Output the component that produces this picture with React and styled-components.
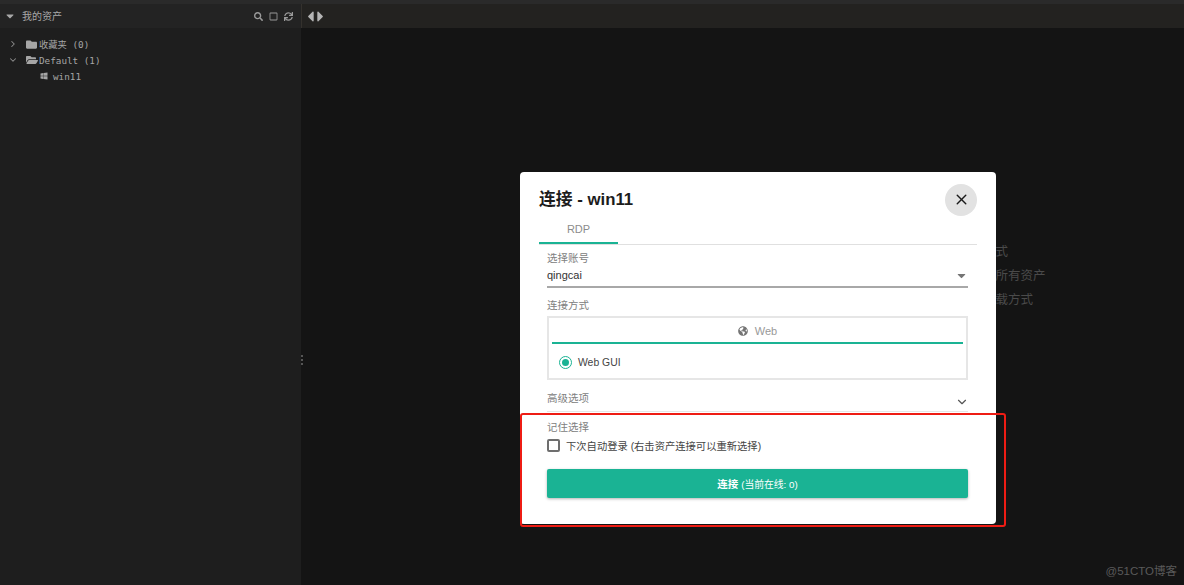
import React from "react";
import styled, { createGlobalStyle } from "styled-components";
import {
  FaCaretDown,
  FaCaretLeft,
  FaCaretRight,
  FaFolder,
  FaFolderOpen,
  FaGlobeAmericas,
  FaRegSquare,
  FaSearch,
  FaSync,
  FaWindows
} from "react-icons/fa";
import { ChevronDown, ChevronRight, X } from "lucide-react";

const SANS = `"Liberation Sans", Roboto, "Noto Sans CJK SC", sans-serif`;
const MONO = `"DejaVu Sans Mono", "Noto Sans CJK SC", monospace`;
const TEAL = "#1ab394";

const GlobalStyle = createGlobalStyle`
  html, body {
    margin: 0;
    height: 100%;
    background: #141414;
    overflow: hidden;
    font-family: ${SANS};
  }
  #root {
    height: 100%;
  }
`;

const Page = styled.div`
  position: relative;
  width: 1184px;
  height: 585px;
  display: flex;
  flex-direction: column;
  overflow: hidden;
`;

const TopStripe = styled.div`
  height: 4px;
  flex: none;
  background: #2a2a2a;
`;

const Workspace = styled.div`
  flex: 1;
  display: flex;
  min-height: 0;
`;

const Sidebar = styled.aside`
  width: 301px;
  flex: none;
  background: #1e1e1e;
  display: flex;
  flex-direction: column;
`;

const SidebarHeader = styled.div`
  height: 24px;
  display: flex;
  align-items: center;
  padding: 0 8px 0 4px;
  background: #232323;
  color: #a8a8a8;
`;

const HeaderTitle = styled.span`
  margin-left: 6px;
  margin-top: -1px;
  flex: 1;
  font-size: 10px;
`;

const HeaderIcons = styled.div`
  display: flex;
  align-items: center;
  gap: 6px;
  color: #9a9a9a;
`;

const Tree = styled.ul`
  list-style: none;
  margin: 0;
  padding: 8px 0 0;
  color: #a6a6a6;
  font-family: ${MONO};
  font-size: 9.3px;
`;

const TreeRow = styled.li`
  height: 16px;
  display: flex;
  align-items: center;
  padding-left: ${p => p.$indent}px;
  gap: ${p => p.$gap || 0}px;
  white-space: pre;
`;

const Caret = styled.span`
  width: 18px;
  display: flex;
  color: #8f8f8f;
`;

const FolderIcon = styled.span`
  width: 13px;
  display: flex;
  color: #a6a6a6;
`;

const WindowsIcon = styled.span`
  width: 8px;
  display: flex;
  color: #a6a6a6;
`;

const Main = styled.main`
  flex: 1;
  display: flex;
  flex-direction: column;
  background: #141414;
  border-left: 1px solid #141414;
`;

const TabBar = styled.div`
  height: 24px;
  background: #232220;
  display: flex;
  align-items: center;
  color: #b4b4b4;
  border-left: 1px solid #34312d;
  margin-left: -1px;
`;

const Hints = styled.ul`
  list-style: none;
  margin: 0;
  padding: 212px 0 0 631px;
  color: #4a4a4a;
  font-size: 12.5px;
  line-height: 24px;
`;

const Splitter = styled.div`
  position: absolute;
  left: 301px;
  top: 355px;
  display: flex;
  flex-direction: column;
  gap: 2px;
`;

const SplitterDot = styled.i`
  width: 2px;
  height: 2px;
  background: #555;
`;

const Modal = styled.div`
  position: absolute;
  left: 520px;
  top: 172px;
  width: 476px;
  height: 352px;
  box-sizing: border-box;
  padding: 12px 19px 0;
  background: #fff;
  border-radius: 4px;
  display: flex;
  flex-direction: column;
`;

const ModalHead = styled.div`
  display: flex;
  align-items: center;
  justify-content: space-between;
  height: 31px;
`;

const ModalTitle = styled.h2`
  margin: 0 0 3px;
  font-size: 16.8px;
  font-weight: 700;
  color: #1c1c1c;
`;

const CloseButton = styled.button`
  width: 32px;
  height: 32px;
  border: 0;
  padding: 0;
  border-radius: 50%;
  background: #e2e2e2;
  color: #1a1a1a;
  display: flex;
  align-items: center;
  justify-content: center;
`;

const Tabs = styled.div`
  height: 29px;
  border-bottom: 1px solid #e0e0e0;
  display: flex;
`;

const Tab = styled.div`
  width: 79px;
  height: 29px;
  box-sizing: border-box;
  border-bottom: 2px solid ${TEAL};
  color: #8c8c8c;
  font-size: 11px;
  display: flex;
  align-items: center;
  justify-content: center;
`;

const Form = styled.div`
  padding: 0 9px 0 8px;
  display: flex;
  flex-direction: column;
`;

const FieldLabel = styled.div`
  color: #808080;
  font-size: 10.5px;
  line-height: 14px;
  margin-top: ${p => p.$top || 0}px;
`;

const SelectRow = styled.div`
  height: 23px;
  box-sizing: border-box;
  border-bottom: 2px solid #a8a8a8;
  display: flex;
  align-items: center;
  justify-content: space-between;
  color: #333;
  font-size: 11px;
  padding-bottom: 1px;
`;

const SelectCaret = styled.span`
  display: flex;
  color: #757575;
`;

const MethodBox = styled.div`
  margin-top: 4px;
  height: 64px;
  box-sizing: border-box;
  border: 2px solid #e6e6e6;
  padding: 0 3px;
  display: flex;
  flex-direction: column;
`;

const MethodTab = styled.div`
  height: 26px;
  box-sizing: border-box;
  border-bottom: 2px solid ${TEAL};
  color: #999;
  font-size: 11px;
  display: flex;
  align-items: center;
  justify-content: center;
  gap: 7px;
  padding-top: 1px;
`;

const GlobeIcon = styled.span`
  display: flex;
  color: #757575;
`;

const RadioRow = styled.label`
  flex: 1;
  display: flex;
  align-items: center;
  padding: 2px 0 0 7px;
  gap: 6px;
  color: #444;
  font-size: 10.4px;
`;

const RadioMark = styled.span`
  width: 11px;
  height: 11px;
  border-radius: 50%;
  border: 1px solid ${TEAL};
  display: flex;
  align-items: center;
  justify-content: center;
`;

const RadioDot = styled.span`
  width: 7px;
  height: 7px;
  border-radius: 50%;
  background: ${TEAL};
`;

const AdvancedRow = styled.div`
  margin-top: 11px;
  height: 21px;
  box-sizing: border-box;
  border-bottom: 1px solid #e6e6e6;
  display: flex;
  justify-content: space-between;
  color: #808080;
  font-size: 10.5px;
  line-height: 14px;
`;

const AdvancedChevron = styled.span`
  display: flex;
  color: #555;
  margin: 4px -1px 0 0;
`;

const RememberRow = styled.label`
  margin-top: 4px;
  height: 14px;
  display: flex;
  align-items: center;
  gap: 6px;
  color: #444;
  font-size: 10.3px;
`;

const CheckBox = styled.span`
  width: 13px;
  height: 13px;
  box-sizing: border-box;
  border: 2px solid #6e6e6e;
  border-radius: 2px;
`;

const ConnectButton = styled.button`
  margin-top: 17px;
  height: 29px;
  border: 0;
  border-radius: 2px;
  background: ${TEAL};
  color: #fff;
  font-family: ${SANS};
  font-size: 10.5px;
  font-weight: 700;
  box-shadow: 0 1px 3px rgba(0, 0, 0, 0.3);
`;

const ButtonNote = styled.span`
  font-size: 9.8px;
  font-weight: 400;
`;

const RedFrame = styled.div`
  position: absolute;
  left: 520px;
  top: 413px;
  width: 486px;
  height: 114px;
  box-sizing: border-box;
  border: 2px solid #ee1c14;
  border-radius: 3px;
  pointer-events: none;
`;

const Watermark = styled.div`
  position: absolute;
  right: 7px;
  bottom: 7px;
  color: #5a5a5a;
  font-size: 11.5px;
`;

const App = () => (
  <Page>
    <GlobalStyle />
    <TopStripe />
    <Workspace>
      <Sidebar>
        <SidebarHeader>
          <FaCaretDown size={12} />
          <HeaderTitle>我的资产</HeaderTitle>
          <HeaderIcons>
            <FaSearch size={9} />
            <FaRegSquare size={9} />
            <FaSync size={9} />
          </HeaderIcons>
        </SidebarHeader>
        <Tree>
          <TreeRow $indent={8}>
            <Caret>
              <ChevronRight size={10} strokeWidth={2.5} />
            </Caret>
            <FolderIcon>
              <FaFolder size={11} />
            </FolderIcon>
            收藏夹 (0)
          </TreeRow>
          <TreeRow $indent={8}>
            <Caret>
              <ChevronDown size={10} strokeWidth={2.5} />
            </Caret>
            <FolderIcon>
              <FaFolderOpen size={12} />
            </FolderIcon>
            Default (1)
          </TreeRow>
          <TreeRow $indent={40} $gap={5}>
            <WindowsIcon>
              <FaWindows size={8} />
            </WindowsIcon>
            win11
          </TreeRow>
        </Tree>
      </Sidebar>
      <Main>
        <TabBar>
          <FaCaretLeft size={17} style={{ marginRight: -7 }} />
          <FaCaretRight size={17} />
        </TabBar>
        <Hints>
          <li>选择连接方式</li>
          <li>在左侧查看所有资产</li>
          <li>设置文件下载方式</li>
        </Hints>
      </Main>
    </Workspace>
    <Splitter>
      <SplitterDot />
      <SplitterDot />
      <SplitterDot />
    </Splitter>

    <Modal>
      <ModalHead>
        <ModalTitle>连接 - win11</ModalTitle>
        <CloseButton>
          <X size={17} strokeWidth={2} />
        </CloseButton>
      </ModalHead>
      <Tabs>
        <Tab>RDP</Tab>
      </Tabs>
      <Form>
        <FieldLabel $top={6}>选择账号</FieldLabel>
        <SelectRow>
          qingcai
          <SelectCaret>
            <FaCaretDown size={13} />
          </SelectCaret>
        </SelectRow>
        <FieldLabel $top={10}>连接方式</FieldLabel>
        <MethodBox>
          <MethodTab>
            <GlobeIcon>
              <FaGlobeAmericas size={10} />
            </GlobeIcon>
            Web
          </MethodTab>
          <RadioRow>
            <RadioMark>
              <RadioDot />
            </RadioMark>
            Web GUI
          </RadioRow>
        </MethodBox>
        <AdvancedRow>
          高级选项
          <AdvancedChevron>
            <ChevronDown size={14} strokeWidth={2} />
          </AdvancedChevron>
        </AdvancedRow>
        <FieldLabel $top={8}>记住选择</FieldLabel>
        <RememberRow>
          <CheckBox />
          下次自动登录 (右击资产连接可以重新选择)
        </RememberRow>
        <ConnectButton>
          连接 <ButtonNote>(当前在线: 0)</ButtonNote>
        </ConnectButton>
      </Form>
    </Modal>
    <RedFrame />
    <Watermark>@51CTO博客</Watermark>
  </Page>
);

export default App;
